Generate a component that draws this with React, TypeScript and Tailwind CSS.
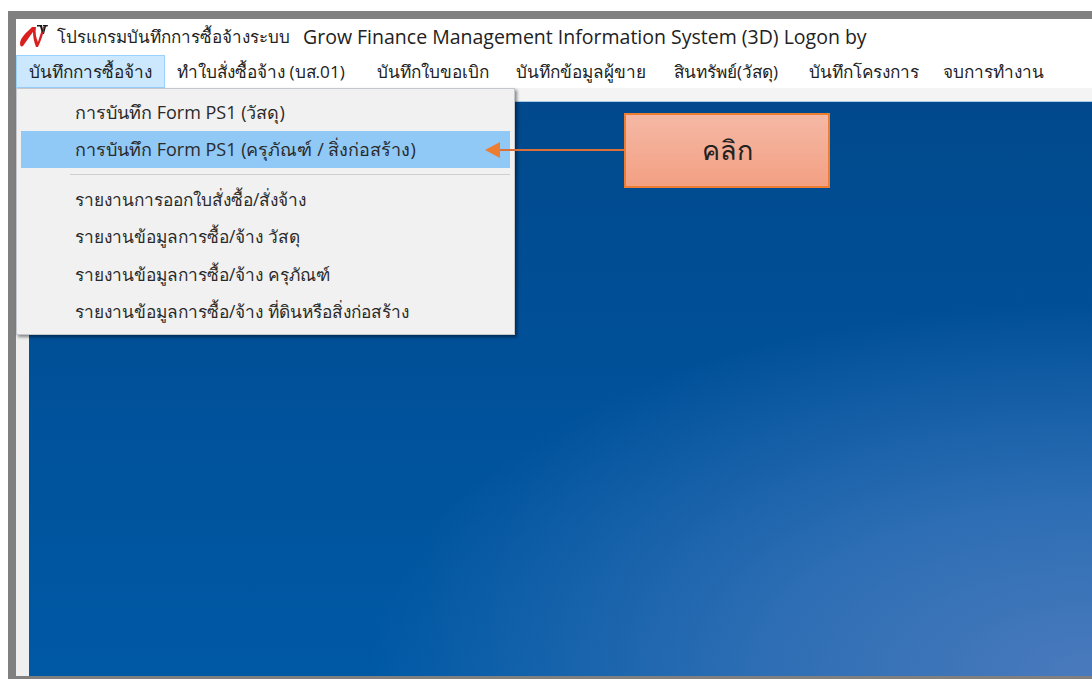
const FONT = "font-['Open_Sans','Noto_Sans',sans-serif]";

const menus = [
  { label: 'บันทึกการซื้อจ้าง', width: 'w-[149px]', active: true },
  { label: 'ทำใบสั่งซื้อจ้าง (บส.01)', width: 'w-[200px]' },
  { label: 'บันทึกใบขอเบิก', width: 'w-[139px]' },
  { label: 'บันทึกข้อมูลผู้ขาย', width: 'w-[158px]' },
  { label: 'สินทรัพย์(วัสดุ)', width: 'w-[135px]' },
  { label: 'บันทึกโครงการ', width: 'w-[134px]' },
  { label: 'จบการทำงาน', width: 'w-[120px]' },
];

const reports = [
  'รายงานการออกใบสั่งซื้อ/สั่งจ้าง',
  'รายงานข้อมูลการซื้อ/จ้าง วัสดุ',
  'รายงานข้อมูลการซื้อ/จ้าง ครุภัณฑ์',
  'รายงานข้อมูลการซื้อ/จ้าง ที่ดินหรือสิ่งก่อสร้าง',
];

function Logo() {
  return (
    <svg width="30" height="26" viewBox="0 0 30 26" className="shrink-0">
      <path d="M2 19 C3 13 8 9 14 3 L18 3 C17 8 18 14 20 18 C21 14 23 8 25 3 L27 3 C25 10 23 17 20 23 L18 23 C16 18 15 13 15 8 C11 13 8 18 5 22 C3 23 2 22 2 19 Z" fill="#d8201f" />
      <path d="M19 1 L24 1 L25 7 L24 9 L22 2.5 L19 2.5 Z M25 1 L30 1 L29.5 2.5 L28 2.5 L26 10 L25 10 L26.5 2.5 L25 2.5 Z" fill="#161616" />
    </svg>
  );
}

function ReportMenu() {
  return (
    <div className="absolute left-0 top-[33px] z-10 w-[499px] h-[247px] bg-[#f1f1f1] border border-[#c4c8cc] shadow-[2px_2px_3px_rgba(0,0,0,0.45)] pl-[4px] pr-[4px] pt-[4px] text-[#2a2a2a] text-[18px]">
      <div className="h-[38px] flex items-center pl-[54px]">การบันทึก Form PS1 (วัสดุ)</div>
      <div className="h-[37px] flex items-center pl-[54px] bg-[#90c8f6]">การบันทึก Form PS1 (ครุภัณฑ์ / สิ่งก่อสร้าง)</div>
      <div className="ml-[49px] mt-[6px] mb-[6px] h-[1px] bg-[#cfcfcf]" />
      {reports.map((r) => (
        <div key={r} className="h-[37.5px] flex items-center pl-[54px] text-[17.3px]">{r}</div>
      ))}
    </div>
  );
}

export default function App() {
  return (
    <div className={`${FONT} w-[1092px] h-[679px] overflow-hidden bg-white pt-[11px] pl-[8px]`}>
      <div className="h-[668px] border-l-[8px] border-t-[8px] border-b-[3px] border-[#808080] flex flex-col">
        {/* title bar */}
        <div className="h-[36px] shrink-0 bg-white flex items-center pl-[2px] gap-[9px] text-[#222]">
          <Logo />
          <span className="text-[17px] whitespace-nowrap">โปรแกรมบันทึกการซื้อจ้างระบบ</span>
          <span className="text-[19.5px] whitespace-nowrap ml-[4px]">Grow Finance Management Information System (3D) Logon by</span>
        </div>

        {/* menu bar */}
        <div className="relative h-[33px] shrink-0 bg-white flex text-[17.2px] text-[#222]">
          {menus.map((m) => (
            <div
              key={m.label}
              className={`${m.width} shrink-0 flex items-center whitespace-nowrap pl-[12px] ${m.active ? 'bg-[#cce8ff] border border-[#99d1ff]' : ''}`}
            >
              {m.label}
            </div>
          ))}
          <ReportMenu />
        </div>

        <div className="h-[14px] shrink-0 bg-[#f4f4f4] border-b border-[#a9c9e4]" />

        {/* MDI client area */}
        <div className="flex-1 flex min-h-0">
          <div className="w-[13px] shrink-0 bg-[#efefef]" />
          <div className="relative flex-1 bg-[radial-gradient(ellipse_68%_65%_at_100%_100%,#4a7abd_0%,#2e6eb4_45%,rgba(20,96,170,0)_100%),linear-gradient(180deg,#01498c_0%,#00519a_50%,#0059a5_100%)]">
            {/* callout pointing at the highlighted item */}
            <div className="absolute left-[595px] top-[11px] z-20 w-[206px] h-[75px] flex items-center justify-center border-2 border-[#ed7d31] bg-[linear-gradient(180deg,#f5b8a5,#f3a083)] text-[27px] font-light text-[#222]">
              คลิก
            </div>
            <div className="absolute left-[467px] top-[47px] z-20 w-[128px] h-[2px] bg-[#d9703a]" />
            <div className="absolute left-[456px] top-[40px] z-20 w-0 h-0 border-y-[8px] border-y-transparent border-r-[15px] border-r-[#ed7d31]" />
          </div>
        </div>
      </div>
    </div>
  );
}
